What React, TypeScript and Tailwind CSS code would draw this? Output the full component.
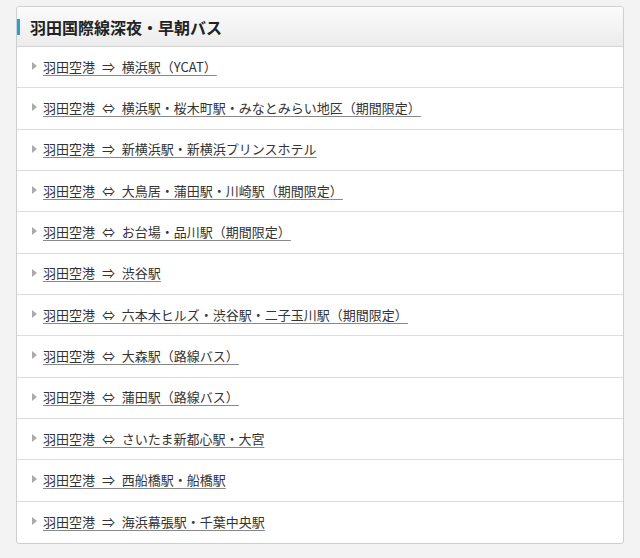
const routes = [
  "羽田空港 ⇒ 横浜駅（YCAT）",
  "羽田空港 ⇔ 横浜駅・桜木町駅・みなとみらい地区（期間限定）",
  "羽田空港 ⇒ 新横浜駅・新横浜プリンスホテル",
  "羽田空港 ⇔ 大鳥居・蒲田駅・川崎駅（期間限定）",
  "羽田空港 ⇔ お台場・品川駅（期間限定）",
  "羽田空港 ⇒ 渋谷駅",
  "羽田空港 ⇔ 六本木ヒルズ・渋谷駅・二子玉川駅（期間限定）",
  "羽田空港 ⇔ 大森駅（路線バス）",
  "羽田空港 ⇔ 蒲田駅（路線バス）",
  "羽田空港 ⇔ さいたま新都心駅・大宮",
  "羽田空港 ⇒ 西船橋駅・船橋駅",
  "羽田空港 ⇒ 海浜幕張駅・千葉中央駅",
];

export default function App() {
  return (
    <div
      className="min-h-[558px] w-[640px] bg-[#f3f3f3] px-4 pt-[6px] pb-3"
      style={{ fontFamily: '"Noto Sans CJK JP", "Noto Sans", sans-serif' }}
    >
      <div className="overflow-hidden rounded-[3px] border border-[#cfcfcf] bg-white">
        <div className="flex h-[40px] items-center border-b border-[#d4d4d4] bg-gradient-to-b from-[#fbfbfb] to-[#ececec]">
          <span className="h-[16px] w-[3px] bg-[#2a9fd6]" />
          <h2 className="ml-[10px] text-[16px] font-bold leading-none text-[#222]">
            羽田国際線深夜・早朝バス
          </h2>
        </div>
        <ul>
          {routes.map((r, i) => (
            <li
              key={i}
              className={`flex h-[41.33px] items-center pb-[2px] pl-[15px] ${
                i < routes.length - 1 ? "border-b border-[#dcdcdc]" : ""
              }`}
            >
              <span className="mr-[6px] h-0 w-0 border-y-[4px] border-l-[5px] border-y-transparent border-l-[#aaa]" />
              <a
                href="#"
                className="text-[13px] leading-none text-[#333] underline decoration-[#888] underline-offset-[3px] [word-spacing:4px]"
              >
                {r}
              </a>
            </li>
          ))}
        </ul>
      </div>
    </div>
  );
}
